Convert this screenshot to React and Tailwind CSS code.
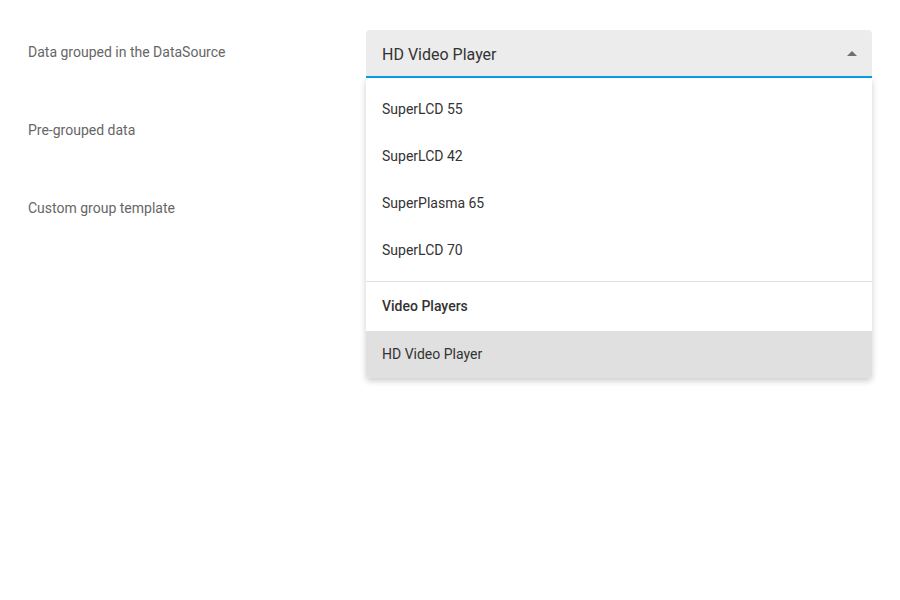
const ITEMS = ["SuperLCD 55", "SuperLCD 42", "SuperPlasma 65", "SuperLCD 70"];

const LABELS = ["Data grouped in the DataSource", "Pre-grouped data", "Custom group template"];

export default function App() {
  return (
    <div className="relative h-[600px] w-[900px] bg-white font-['Roboto',sans-serif]">
      <div className="flex flex-col pl-7 pt-[43px]">
        {LABELS.map((label) => (
          <div key={label} className="h-[78px] text-[14px] leading-[18px] text-[#666666]">
            {label}
          </div>
        ))}
      </div>

      <div className="absolute left-[366px] top-[30px] w-[506px]">
        <div className="flex h-12 items-center justify-between rounded-t bg-[#ececec] border-b-2 border-[#03a2e8] pl-4 pr-[15px] pt-[3px]">
          <span className="text-[16px] text-[#333333]">HD Video Player</span>
          <svg width="10" height="5" viewBox="0 0 10 5" className="mb-[2px]">
            <path d="M0 5 L5 0 L10 5 Z" fill="#6f6f6f" />
          </svg>
        </div>
        <div className="rounded-b bg-white pt-[8px] shadow-[0_3px_6px_rgba(0,0,0,0.2)]">
          {ITEMS.map((item) => (
            <div key={item} className="flex h-[47px] items-center px-4 text-[14px] text-[#333333]">
              {item}
            </div>
          ))}
          <div className="mt-[7px] border-t border-[#e0e0e0]" />
          <div className="flex h-[49px] items-center px-4 text-[14px] font-medium text-[#333333]">
            Video Players
          </div>
          <div className="flex h-[47px] items-center rounded-b bg-[#e0e0e0] px-4 text-[14px] text-[#333333]">
            HD Video Player
          </div>
        </div>
      </div>
    </div>
  );
}
